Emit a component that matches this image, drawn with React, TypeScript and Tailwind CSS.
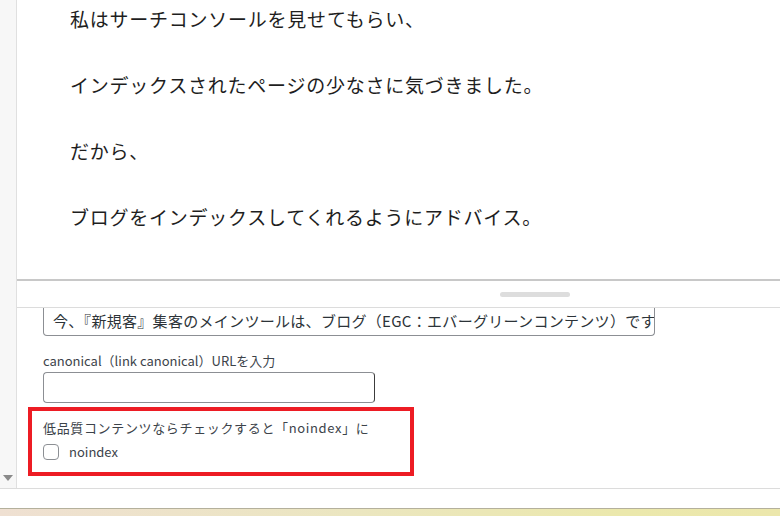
const jp = 'font-["Noto_Sans_CJK_JP","Noto_Sans",sans-serif]';

const lines = [
  '私はサーチコンソールを見せてもらい、',
  'インデックスされたページの少なさに気づきました。',
  'だから、',
  'ブログをインデックスしてくれるようにアドバイス。',
];

export default function App() {
  return (
    <div className={`flex h-[516px] w-[780px] flex-col overflow-hidden bg-white ${jp}`}>
      <div className="flex h-[489px] shrink-0 border-b border-[#dcdcdc]">
        {/* scroll gutter */}
        <div className="flex w-[17px] shrink-0 flex-col justify-end border-r border-[#e0e0e0] bg-[#f7f7f7] pb-[7px] pl-[3px]">
          <svg width="10" height="6" viewBox="0 0 10 6">
            <path d="M0 0h10L5 6z" fill="#8a8a8a" />
          </svg>
        </div>

        <div className="flex min-w-0 flex-1 flex-col">
          {/* editor body */}
          <div className="flex h-[279px] shrink-0 flex-col gap-[36px] pl-[53px] pt-[4px] text-[19px] leading-[30px] tracking-[0.04em] text-[#1e1e1e]">
            {lines.map((line) => (
              <p key={line}>{line}</p>
            ))}
          </div>

          <div className="h-[2px] bg-[#c8c8c8]" />

          {/* resize handle */}
          <div className="flex h-[26px] shrink-0 items-center pl-[483px]">
            <div className="h-[5px] w-[70px] rounded-full bg-[#dddddd]" />
          </div>

          <div className="h-px bg-[#dcdcdc]" />

          {/* meta box */}
          <div className="flex flex-col text-[13px] text-[#3c434a]">
            <div className="ml-[26px] flex h-[28px] w-[612px] items-center overflow-hidden whitespace-nowrap rounded-b-[4px] border border-t-0 border-[#8c8f94] pl-[9px] text-[15px] tracking-[0.02em] text-[#2c3338]">
              今、『新規客』集客のメインツールは、ブログ（EGC：エバーグリーンコンテンツ）です
            </div>

            <label className="ml-[26px] mt-[15px] leading-[20px]">canonical（link canonical）URLを入力</label>
            <div className="ml-[26px] mt-[1px] h-[31px] w-[332px] rounded-[4px] border border-[#8c8f94] border-r-[#3c3c3c]" />

            <div className="ml-[11px] mt-[4px] flex h-[69px] w-[386px] flex-col border-4 border-[#ed1c24] pl-[11px] pt-[7px]">
              <p className="leading-[20px] tracking-[0.05em]">低品質コンテンツならチェックすると「noindex」に</p>
              <label className="mt-[6px] flex items-center gap-[10px]">
                <span className="h-[16px] w-[16px] rounded-[4px] border border-[#8c8f94] bg-white" />
                <span className="leading-[16px]">noindex</span>
              </label>
            </div>
          </div>
        </div>
      </div>

      <div className="mt-[19px] flex-1 border-t border-[#b4b09c] bg-[linear-gradient(90deg,#efe0d2_0%,#ebe6c0_45%,#ebe8ac_80%,#ece7ac_100%)]" />
    </div>
  );
}
